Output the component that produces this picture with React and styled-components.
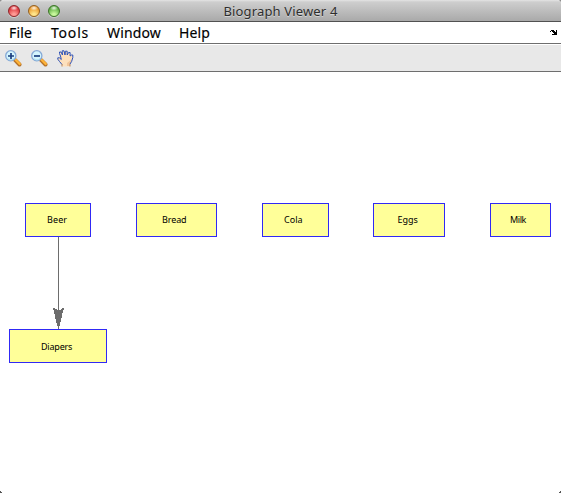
import React from 'react';
import styled, { createGlobalStyle } from 'styled-components';

const GlobalStyle = createGlobalStyle`
  * { box-sizing: border-box; }
  html, body { margin: 0; padding: 0; background: #fff; overflow: hidden; }
`;

const Window = styled.div`
  display: flex;
  flex-direction: column;
  position: relative;
  width: 561px;
  height: 493px;
  overflow: hidden;
  background: #fff;
  color: #000;
  font-family: "Noto Sans", "Open Sans", sans-serif;
`;

const TitleBar = styled.header`
  display: grid;
  grid-template-columns: 100px 1fr 100px;
  align-items: center;
  flex: none;
  height: 22px;
  border-bottom: 1px solid #515151;
  border-radius: 4px 4px 0 0;
  background: linear-gradient(#e4e4e4 0, #cecece 2px, #a9a9a9 100%);
  box-shadow: 0 -4px 0 4px #8d8d8d;
`;

const Lights = styled.div`
  display: flex;
  gap: 8px;
  padding-left: 8px;
`;

const Light = styled.span`
  width: 12px;
  height: 12px;
  border: 1px solid ${p => p.$edge};
  border-radius: 50%;
  background:
    radial-gradient(ellipse 4px 2.5px at 50% 20%, rgba(255, 255, 255, 0.9), rgba(255, 255, 255, 0)),
    radial-gradient(circle at 50% 90%, ${p => p.$glow} 15%, ${p => p.$fill} 75%);
  box-shadow: 0 1px 0 rgba(255, 255, 255, 0.35);
`;

const Title = styled.h1`
  margin: 0;
  text-align: center;
  font-size: 13px;
  line-height: 20px;
  font-weight: 400;
  letter-spacing: 0.15px;
  color: #2e2e2e;
  text-shadow: 0 1px 0 rgba(255, 255, 255, 0.45);
  white-space: nowrap;
`;

const MenuBar = styled.nav`
  display: flex;
  align-items: center;
  flex: none;
  height: 22px;
  padding: 0 3px 0 9px;
  border-bottom: 1px solid #6e6e6e;
`;

const MenuItem = styled.span`
  flex: none;
  width: ${p => p.$width}px;
  font-size: 14px;
  line-height: 21px;
  letter-spacing: ${p => p.$spacing}px;
  -webkit-text-stroke: 0.15px #000;
  white-space: nowrap;
`;

const DockIcon = styled.svg`
  margin-left: auto;
`;

const ToolBar = styled.div`
  display: flex;
  align-items: center;
  gap: 9px;
  flex: none;
  height: 28px;
  padding: 0 0 0 5px;
  border-top: 1px solid #fff;
  border-bottom: 1px solid #6e6e6e;
  background: #e8e8e8;
`;

const Icon = styled.svg`
  display: block;
  flex: none;
`;

const Canvas = styled.main`
  position: relative;
  flex: 1;
  background: #fff;
`;

const Node = styled.div`
  position: absolute;
  left: ${p => p.$x}px;
  top: ${p => p.$y}px;
  width: ${p => p.$w}px;
  height: 34px;
  padding-left: ${p => p.$inset}px;
  border: 1px solid #3029f5;
  background: #ffff99;
  font-size: 9px;
  line-height: ${p => p.$line || 31}px;
  letter-spacing: ${p => p.$spacing}px;
  white-space: nowrap;
`;

const Edge = styled.svg`
  position: absolute;
  left: 52px;
  top: 165px;
`;

const Corner = styled.svg`
  position: absolute;
  bottom: 0;
  ${p => (p.$right ? 'right: 0; transform: scaleX(-1);' : 'left: 0;')}
`;

function Magnifier({ plus }) {
  return (
    <Icon width="17" height="17" viewBox="0 0 17 17">
      <path d="M10.2 10.2 L14.5 14.5" stroke="#b5722a" strokeWidth="4" strokeLinecap="round" />
      <path d="M10.8 10 L14.7 13.9" stroke="#fdb338" strokeWidth="2.4" strokeLinecap="round" />
      <circle cx="5.8" cy="5.8" r="5.1" fill="#d4f5fd" stroke="#86a9d6" strokeWidth="1.3" />
      <path d="M2.8 8.6 A4.2 4.2 0 0 0 9 8.6" fill="none" stroke="#a6daf0" />
      <path d={plus ? 'M3 6H9M6 3V9' : 'M3 6H9'} stroke="#1b3f80" strokeWidth="1.7" fill="none" />
    </Icon>
  );
}

function Hand() {
  return (
    <Icon width="17" height="17" viewBox="0 0 17 17">
      <path
        d="M5 16.5V14.5L2.5 11.5L.8 9.2V7.8H2.4L4.3 9.5L3.5 6L2.5 3.5V2H4L5.5 5L5.2 2V.8H7L8 5L8.4 1.2H10.2V5L11.6 2.5H13.1V6L14.5 5H15.8V7.5L14.6 11.5L13 14V16.5Z"
        fill="#fde0bd"
      />
      <path d="M10 16V13L14 10V12L13 14V16Z" fill="#f2c59a" />
      <path
        d="M5 14.5L2.5 11.5L.8 9.2V7.8H2.4L4.3 9.5L3.5 6L2.5 3.5V2H4L5.5 5L5.2 2V.8H7L8 5L8.4 1.2H10.2V5L11.6 2.5H13.1V6L14.5 5H15.8V7.5L14.6 11.5L13 14"
        fill="none" stroke="#2b50b8" strokeWidth="1"
      />
      <path d="M5 14V16.5M13 14V16.5" stroke="#b5845c" />
    </Icon>
  );
}

const lights = [
  { edge: '#8f2529', fill: '#d82e35', glow: '#ff9a94' },
  { edge: '#94601f', fill: '#e99528', glow: '#ffe58a' },
  { edge: '#3c7427', fill: '#57a93e', glow: '#c7f79b' },
];

const menus = [
  { label: 'File', width: 42, spacing: 0.2 },
  { label: 'Tools', width: 56, spacing: 0.8 },
  { label: 'Window', width: 72, spacing: 0.15 },
  { label: 'Help', width: 40, spacing: 0.1 },
];

const nodes = [
  { label: 'Beer', x: 25, y: 131, w: 66, inset: 21, spacing: 0.1 },
  { label: 'Bread', x: 136, y: 131, w: 81, inset: 25, spacing: -0.1 },
  { label: 'Cola', x: 262, y: 131, w: 67, inset: 21, spacing: 0 },
  { label: 'Eggs', x: 373, y: 131, w: 72, inset: 23.5, spacing: 0 },
  { label: 'Milk', x: 490, y: 131, w: 61, inset: 19, spacing: -0.4 },
  { label: 'Diapers', x: 9, y: 257, w: 98, inset: 31, spacing: -0.2, line: 33 },
];

export default function App() {
  return (
    <>
      <GlobalStyle />
      <Window>
        <TitleBar>
          <Lights>
            {lights.map(l => <Light key={l.fill} $edge={l.edge} $fill={l.fill} $glow={l.glow} />)}
          </Lights>
          <Title>Biograph Viewer 4</Title>
        </TitleBar>
        <MenuBar>
          {menus.map(m => (
            <MenuItem key={m.label} $width={m.width} $spacing={m.spacing}>{m.label}</MenuItem>
          ))}
          <DockIcon width="8" height="5" viewBox="0 0 8 5" shapeRendering="crispEdges">
            <path d="M1 0H4V1H5V2H6V0H7V5H2V4H4V3H3V2H2V1H1V2H0V1H1Z" />
          </DockIcon>
        </MenuBar>
        <ToolBar>
          <Magnifier plus />
          <Magnifier />
          <Hand />
        </ToolBar>
        <Canvas>
          <Edge width="13" height="92" viewBox="0 0 13 92" shapeRendering="crispEdges">
            <path d="M6 0H7V92H6Z" fill="#6d6d6d" />
            <path d="M1 71H3V72H5V73H9V72H10V71H12V73H11V76H10V81H9V85H8V89H5V86H4V82H3V77H2V73H1Z" fill="#6d6d6d" />
          </Edge>
          {nodes.map(n => (
            <Node
              key={n.label}
              $x={n.x}
              $y={n.y}
              $w={n.w}
              $inset={n.inset}
              $spacing={n.spacing}
              $line={n.line}
            >
              {n.label}
            </Node>
          ))}
        </Canvas>
        <Corner width="2" height="2" viewBox="0 0 2 2" shapeRendering="crispEdges">
          <path d="M0 0H1V1H2V2H0Z" fill="#555" />
        </Corner>
        <Corner $right width="2" height="2" viewBox="0 0 2 2" shapeRendering="crispEdges">
          <path d="M0 0H1V1H2V2H0Z" fill="#555" />
        </Corner>
      </Window>
    </>
  );
}
